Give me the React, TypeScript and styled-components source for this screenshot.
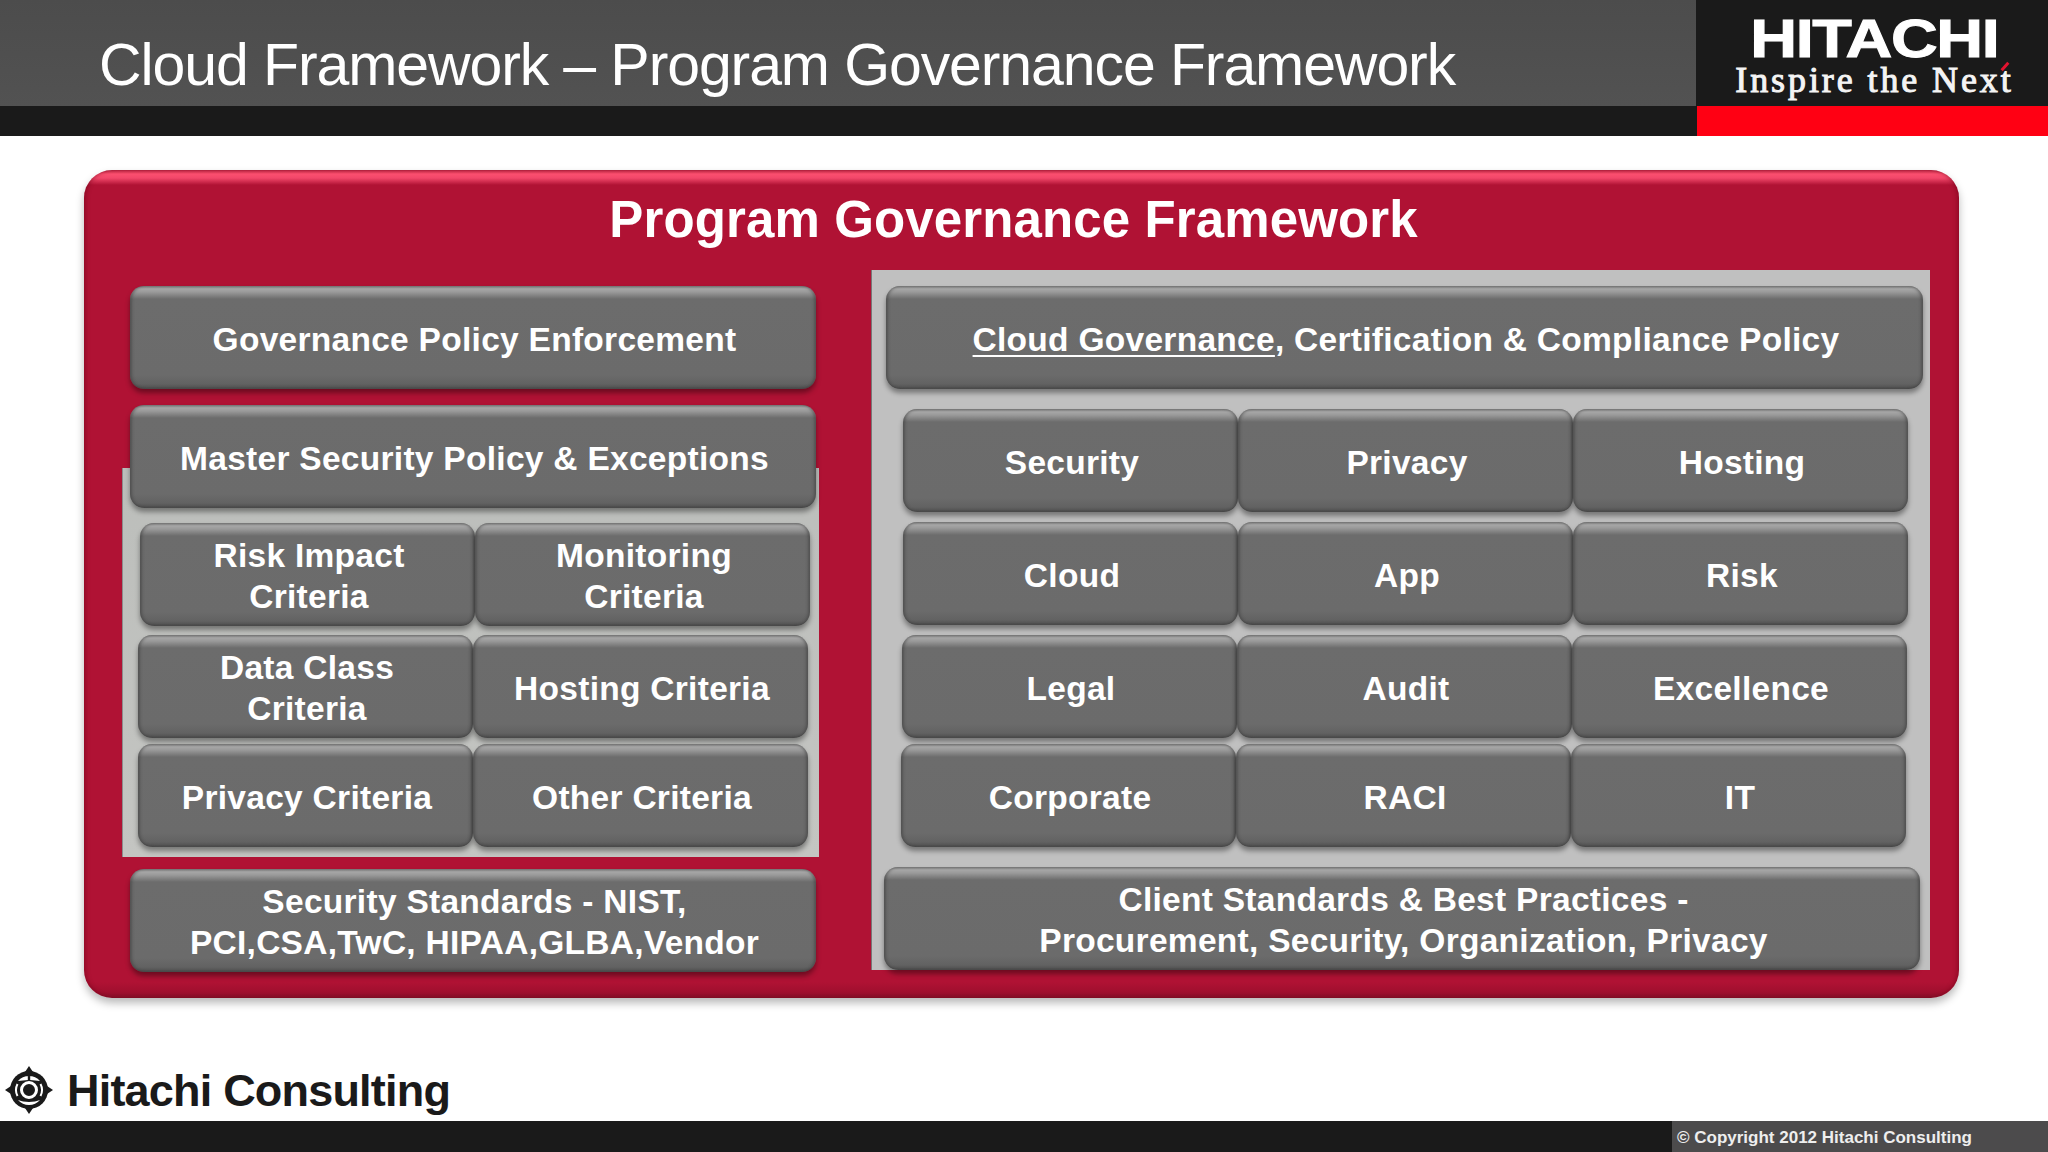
import React from 'react';
import styled, { createGlobalStyle } from 'styled-components';

const GlobalStyle = createGlobalStyle`
  html, body {
    margin: 0;
    padding: 0;
    background: #fff;
  }
  body {
    font-family: "Liberation Sans", Arial, sans-serif;
  }
`;

const Page = styled.div`
  width: 2048px;
  height: 1152px;
  display: flex;
  flex-direction: column;
  overflow: hidden;
`;

/* top banner */
const Header = styled.header`
  display: flex;
  height: 136px;
  flex: none;
`;

const HeaderMain = styled.div`
  flex: 1;
  display: flex;
  flex-direction: column;
`;

const TitleBar = styled.div`
  height: 106px;
  background: linear-gradient(to bottom, #4c4c4c, #525252);
  display: flex;
  align-items: center;
  padding-left: 99px;
  padding-top: 24px;
  box-sizing: border-box;
`;

const HeaderTitle = styled.h1`
  margin: 0;
  color: #fff;
  font-size: 59px;
  font-weight: 400;
  letter-spacing: -1.1px;
  white-space: nowrap;
`;

const BlackBar = styled.div`
  flex: 1;
  background: #1a1a1a;
`;

const LogoPanel = styled.div`
  width: 352px;
  display: flex;
  flex-direction: column;
  background: #1a1a1a;
`;

const LogoBox = styled.div`
  position: relative;
  height: 106px;
  display: flex;
  flex-direction: column;
  align-items: center;
  box-sizing: border-box;
  padding: 12px 0 0 5px;
`;

const LogoWord = styled.div`
  color: #fff;
  font-size: 54px;
  line-height: 52px;
  font-weight: 700;
  letter-spacing: -1.2px;
  -webkit-text-stroke: 1px #fff;
  transform: scaleX(1.2);
`;

const LogoTag = styled.div`
  color: #f4f4f4;
  font-family: "Liberation Serif", "DejaVu Serif", serif;
  font-size: 36px;
  line-height: 32px;
  font-weight: 400;
  letter-spacing: 2.9px;
  -webkit-text-stroke: 1px #f4f4f4;
  white-space: nowrap;
`;

const RedTick = styled.span`
  position: absolute;
  top: 65px;
  left: 304px;
  width: 10px;
  height: 3px;
  background: #e2132f;
  transform: rotate(-48deg);
`;

const RedBar = styled.div`
  flex: 1;
  margin-left: 1px;
  background: #ff0013;
`;

/* main framework slide */
const Main = styled.main`
  flex: 1;
  padding: 34px 0 0 84px;
`;

const Frame = styled.section`
  width: 1875px;
  height: 828px;
  box-sizing: border-box;
  padding: 0 29px 0 38px;
  border-radius: 28px;
  background: linear-gradient(
    to bottom,
    #c42a49 0,
    #fb4f6f 4px,
    #f2476a 8px,
    #b01234 15px,
    #b01234 calc(100% - 16px),
    #a00f2e calc(100% - 6px),
    #86102a 100%
  );
  box-shadow:
    0 5px 8px rgba(0, 0, 0, 0.28),
    inset 3px 0 4px -1px rgba(110, 0, 25, 0.45),
    inset -3px 0 4px -1px rgba(110, 0, 25, 0.45);
`;

const FrameTitle = styled.h2`
  margin: 0 25px 0 0;
  height: 100px;
  padding: 22px 0 0 0;
  box-sizing: border-box;
  color: #fff;
  font-size: 51px;
  line-height: 56px;
  font-weight: 700;
  letter-spacing: 0.12px;
  text-align: center;
`;

const Columns = styled.div`
  display: flex;
  gap: 52px;
  align-items: flex-start;
`;

const LeftColumn = styled.div`
  width: 697px;
  flex: none;
  padding-top: 16px;
`;

const Tile = styled.div<{ $width?: number; $left?: number; $top?: number }>`
  position: relative;
  z-index: 1;
  box-sizing: border-box;
  width: ${({ $width }) => ($width ? `${$width}px` : 'auto')};
  height: 103px;
  margin-left: ${({ $left }) => $left ?? 0}px;
  margin-top: ${({ $top }) => $top ?? 0}px;
  display: flex;
  align-items: center;
  justify-content: center;
  padding: 3px 0 0 3px;
  border-radius: 14px;
  color: #fff;
  font-size: 33.5px;
  line-height: 41px;
  font-weight: 700;
  letter-spacing: 0.28px;
  text-align: center;
  white-space: nowrap;
  background: linear-gradient(
    to bottom,
    #7d7d7d 0,
    #a6a6a6 3px,
    #9a9a9a 6px,
    #6c6c6c 13px,
    #6b6b6b calc(100% - 14px),
    #626262 calc(100% - 5px),
    #4c4c4c 100%
  );
  box-shadow:
    0 4px 5px rgba(0, 0, 0, 0.38),
    inset 3px 0 3px -1px rgba(50, 50, 50, 0.45),
    inset -3px 0 3px -1px rgba(50, 50, 50, 0.45);
`;

const CriteriaPanel = styled.div`
  margin-top: -40px;
  height: 389px;
  box-sizing: border-box;
  padding-top: 55px;
  background: linear-gradient(to bottom, #bcbebb, #c4c5c2);
  border-left: 1px solid #8c8c8c;
`;

const TileRow = styled.div<{ $count: number; $left: number; $top?: number }>`
  display: grid;
  grid-template-columns: repeat(${({ $count }) => $count}, 335px);
  margin-left: ${({ $left }) => $left}px;
  margin-top: ${({ $top }) => $top ?? 0}px;
`;

const RightPanel = styled.div`
  width: 1059px;
  height: 700px;
  flex: none;
  box-sizing: border-box;
  padding-top: 16px;
  background: #c0c0c0;
  border-left: 1px solid #777;
`;

const Underlined = styled.span`
  text-decoration: underline;
  text-decoration-thickness: 2px;
  text-underline-offset: 4px;
`;

/* footer */
const BrandRow = styled.div`
  height: 123px;
  flex: none;
  box-sizing: border-box;
  padding: 68px 0 0 5px;
  display: flex;
  align-items: flex-start;
  gap: 14px;
`;

const BrandName = styled.div`
  color: #1a1a1a;
  font-size: 45px;
  line-height: 54px;
  font-weight: 700;
  letter-spacing: -0.8px;
  margin-top: -2px;
`;

const FooterBar = styled.footer`
  flex: 1;
  display: flex;
  justify-content: flex-end;
  background: #1a1a1a;
`;

const Copyright = styled.div`
  width: 376px;
  box-sizing: border-box;
  padding: 5px 0 0 5px;
  background: #4c4b4c;
  color: #eee;
  font-size: 17px;
  line-height: 24px;
  font-weight: 700;
  white-space: nowrap;
`;

const Emblem = () => (
  <svg width="48" height="48" viewBox="-24 -24 48 48" aria-hidden="true">
    <circle r="19" fill="#1a1a1a" />
    <path d="M0-24 4-18H-4ZM0 24 4 18H-4ZM-24 0-18 4V-4ZM24 0 18 4V-4Z" fill="#1a1a1a" />
    <path d="M-11-9A14.5 14.5 0 0 1 11-9L1.2-10V-14H-1.2V-10Z" fill="#fff" />
    <path d="M-11 10A14.5 14.5 0 0 0 11 10C5 12.5-5 12.5-11 10Z" fill="#fff" />
    <path d="M-11.5-6A13 13 0 0 0-11.5 6M11.5-6A13 13 0 0 1 11.5 6" fill="none" stroke="#fff" strokeWidth="2" />
    <circle r="7.5" fill="none" stroke="#fff" strokeWidth="3" />
    <circle r="3.6" fill="#1a1a1a" />
  </svg>
);

export default function App() {
  return (
    <Page>
      <GlobalStyle />
      <Header>
        <HeaderMain>
          <TitleBar>
            <HeaderTitle>Cloud Framework – Program Governance Framework</HeaderTitle>
          </TitleBar>
          <BlackBar />
        </HeaderMain>
        <LogoPanel>
          <LogoBox>
            <LogoWord>HITACHI</LogoWord>
            <LogoTag>Inspire the Next</LogoTag>
            <RedTick />
          </LogoBox>
          <RedBar />
        </LogoPanel>
      </Header>

      <Main>
        <Frame>
          <FrameTitle>Program Governance Framework</FrameTitle>
          <Columns>
            <LeftColumn>
              <Tile $left={8} $width={686}>Governance Policy Enforcement</Tile>
              <Tile $left={8} $width={686} $top={16}>Master Security Policy &amp; Exceptions</Tile>
              <CriteriaPanel>
                <TileRow $count={2} $left={17}>
                  <Tile>Risk Impact<br />Criteria</Tile>
                  <Tile>Monitoring<br />Criteria</Tile>
                </TileRow>
                <TileRow $count={2} $left={15} $top={9}>
                  <Tile>Data Class<br />Criteria</Tile>
                  <Tile>Hosting Criteria</Tile>
                </TileRow>
                <TileRow $count={2} $left={15} $top={6}>
                  <Tile>Privacy Criteria</Tile>
                  <Tile>Other Criteria</Tile>
                </TileRow>
              </CriteriaPanel>
              <Tile $left={8} $width={686} $top={12}>Security Standards - NIST,<br />PCI,CSA,TwC, HIPAA,GLBA,Vendor</Tile>
            </LeftColumn>

            <RightPanel>
              <Tile $left={14} $width={1037}>
                <span><Underlined>Cloud Governance</Underlined>, Certification &amp; Compliance Policy</span>
              </Tile>
              <TileRow $count={3} $left={31} $top={20}>
                <Tile>Security</Tile>
                <Tile>Privacy</Tile>
                <Tile>Hosting</Tile>
              </TileRow>
              <TileRow $count={3} $left={31} $top={10}>
                <Tile>Cloud</Tile>
                <Tile>App</Tile>
                <Tile>Risk</Tile>
              </TileRow>
              <TileRow $count={3} $left={30} $top={10}>
                <Tile>Legal</Tile>
                <Tile>Audit</Tile>
                <Tile>Excellence</Tile>
              </TileRow>
              <TileRow $count={3} $left={29} $top={6}>
                <Tile>Corporate</Tile>
                <Tile>RACI</Tile>
                <Tile>IT</Tile>
              </TileRow>
              <Tile $left={12} $width={1036} $top={20}>
                Client Standards &amp; Best Practices -<br />Procurement, Security, Organization, Privacy
              </Tile>
            </RightPanel>
          </Columns>
        </Frame>
      </Main>

      <BrandRow>
        <Emblem />
        <BrandName>Hitachi Consulting</BrandName>
      </BrandRow>
      <FooterBar>
        <Copyright>© Copyright 2012 Hitachi Consulting</Copyright>
      </FooterBar>
    </Page>
  );
}
